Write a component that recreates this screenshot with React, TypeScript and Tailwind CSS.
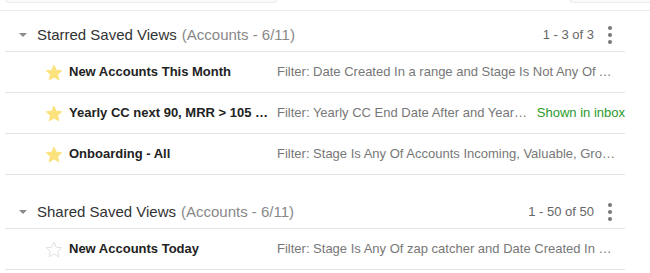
import React from "react";

type Row = { name: string; filter: string; starred: boolean; badge?: string };

const starred: Row[] = [
  {
    name: "New Accounts This Month",
    filter: "Filter: Date Created In a range and Stage Is Not Any Of Accounts Incoming",
    starred: true,
  },
  {
    name: "Yearly CC next 90, MRR > 105 and more",
    filter: "Filter: Yearly CC End Date After and Yearly CC Start",
    starred: true,
    badge: "Shown in inbox",
  },
  {
    name: "Onboarding - All",
    filter: "Filter: Stage Is Any Of Accounts Incoming, Valuable, Growth, Onboarding",
    starred: true,
  },
];

const shared: Row[] = [
  {
    name: "New Accounts Today",
    filter: "Filter: Stage Is Any Of zap catcher and Date Created In a range",
    starred: false,
  },
];

function Star({ filled }: { filled: boolean }) {
  return (
    <svg width="18" height="17" viewBox="0 0 24 23" className="shrink-0">
      <path
        d="M12 1.5l3.1 6.9 7.4.7-5.6 5 1.7 7.4L12 17.6l-6.6 3.9 1.7-7.4-5.6-5 7.4-.7z"
        fill={filled ? "#fbe27c" : "none"}
        stroke={filled ? "#fbe27c" : "#dcdcdc"}
        strokeWidth="1.2"
        strokeLinejoin="round"
      />
    </svg>
  );
}

function Dots() {
  return (
    <div className="flex flex-col items-center gap-[3px] w-[8px]">
      <span className="block h-[4px] w-[4px] rounded-full bg-[#777]" />
      <span className="block h-[4px] w-[4px] rounded-full bg-[#777]" />
      <span className="block h-[4px] w-[4px] rounded-full bg-[#777]" />
    </div>
  );
}

function Section({ title, count, rows }: { title: string; count: string; rows: Row[] }) {
  return (
    <div className="w-[620px] ml-[5px]">
      <div className="h-[41px] pt-2 flex items-center border-b border-[#e4e4e4]">
        <span className="ml-[14px] w-0 h-0 border-l-[4px] border-r-[4px] border-t-[4px] border-l-transparent border-r-transparent border-t-[#8a8a8a]" />
        <span className="ml-[10px] text-[15px] text-[#333]">{title}</span>
        <span className="ml-[5px] text-[15px] text-[#888]">(Accounts - 6/11)</span>
        <span className="ml-auto text-[13px] text-[#666]">{count}</span>
        <div className="ml-[12px] mr-[11px]">
          <Dots />
        </div>
      </div>
      {rows.map((r) => (
        <div key={r.name} className="h-[41px] flex items-center border-b border-[#e4e4e4]">
          <div className="ml-[40px] w-[24px]">
            <Star filled={r.starred} />
          </div>
          <div className="w-[208px] pr-[6px] truncate text-[13px] font-bold text-[#222]">{r.name}</div>
          {r.badge ? (
            <div className="flex-1 min-w-0 flex items-center">
              <span className="truncate text-[13px] text-[#777]">{r.filter}</span>
              <span className="ml-[9px] shrink-0 text-[13px] text-[#2a9a2a]">{r.badge}</span>
            </div>
          ) : (
            <div className="flex-1 min-w-0 pr-[9px] truncate text-[13px] text-[#777]">{r.filter}</div>
          )}
        </div>
      ))}
    </div>
  );
}

export default function App() {
  return (
    <div
      className="w-[650px] h-[273px] overflow-hidden bg-white"
      style={{ fontFamily: '"Liberation Sans", Arial, sans-serif' }}
    >
      <div className="h-[11px] flex border-b border-[#ececec]">
        <div className="ml-[5px] w-[272px] h-[3px] bg-[#fafafa] border-x border-b border-[#ececec] rounded-b-[4px]" />
        <div className="ml-auto w-[80px] h-[3px] bg-[#fafafa] border-l border-b border-[#ececec] rounded-bl-[4px]" />
      </div>
      <Section title="Starred Saved Views" count="1 - 3 of 3" rows={starred} />
      <div className="h-[13px]" />
      <Section title="Shared Saved Views" count="1 - 50 of 50" rows={shared} />
    </div>
  );
}
